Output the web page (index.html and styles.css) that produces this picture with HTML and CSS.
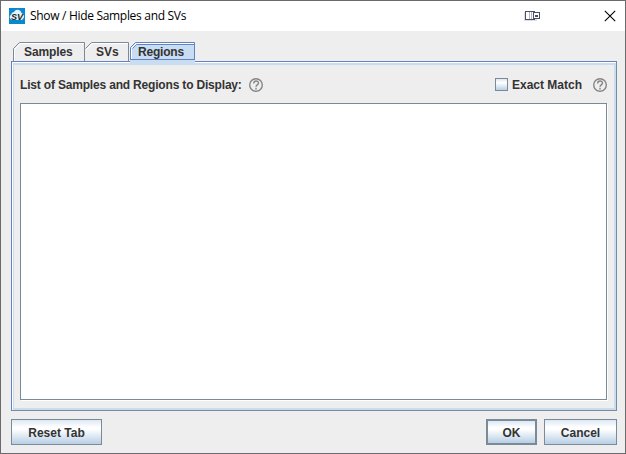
FILE: index.html
```html
<!DOCTYPE html>
<html lang="en">
<head>
<meta charset="utf-8">
<title>Show / Hide Samples and SVs</title>
<link rel="stylesheet" href="styles.css">
</head>
<body>
<div class="window">
  <header class="titlebar">
    <svg class="app-icon" width="16" height="16" viewBox="0 0 16 16"><path fill="#0788cf" d="M0 0h16v16H0z"/><path fill="#e4f3fa" d="M3 12a3 3 0 0 1-.8-5.500A3 3 0 0 1 5 4a4 4 0 0 1 7.500 1A3.800 3.800 0 0 1 13 12z"/><text class="app-letters" x="2" y="11.500">SV</text></svg>
    <h1 class="title">Show / Hide Samples and SVs</h1>
    <svg class="device" width="17" height="12" viewBox="0 0 17 12" shape-rendering="crispEdges"><path fill="#dddde2" d="M0 2h13v9H0z"/><path fill="#fff" stroke="#4b5064" d="M1.500 1.500h9v8h-9z"/><path stroke="#b5b7c0" d="M5.500 2v7M7.500 2v7"/><path fill="#fff" stroke="#4b5064" d="M9.500 2.500h6v6h-6z"/><path fill="#4b5064" d="M11 5h3v2h-3z"/></svg>
    <svg class="close" width="12" height="12" viewBox="0 0 12 12"><path stroke="#000" stroke-width="1.1" d="M.8.8l10.400 10.400M11.200.8L.8 11.200"/></svg>
  </header>
  <nav class="tabs">
    <div class="tab samples"><svg width="72" height="19"><path class="light" d="M1.500 19V7.500l6-6H71"/><path class="edge" d="M.5 19V6.500l6-6h65V19"/></svg><span>Samples</span></div>
    <div class="tab svs"><svg width="44" height="19"><path class="light" d="M1.500 7.500l6-6H43"/><path class="edge" d="M.5 6.500l6-6h37V19"/></svg><span>SVs</span></div>
    <div class="tab regions"><svg width="66" height="20"><path class="selected-fill" d="M1 20V6l5-5h59v19z"/><path class="light" d="M1.500 18V6.500l5-5H64"/><path class="selected-edge" d="M.5 19V5.500l5-5h59V19M2.500 6.500l4-4H64M1 17.500h63"/></svg><span>Regions</span></div>
  </nav>
  <main class="panel">
    <div class="options">
      <span class="list-label">List of Samples and Regions to Display:</span>
      <svg class="help" width="14" height="14" viewBox="0 0 14 14"><circle cx="7" cy="7" r="6.300"/><path d="M4.700 5.500c0-3.400 4.800-3.300 4.800-.4C9.500 6.900 7 6.900 7 8.800M7 9.800v1.600"/></svg>
      <label class="match"><span class="checkbox"></span>Exact Match</label>
      <svg class="help" width="14" height="14" viewBox="0 0 14 14"><circle cx="7" cy="7" r="6.300"/><path d="M4.700 5.500c0-3.400 4.800-3.300 4.800-.4C9.500 6.900 7 6.900 7 8.800M7 9.800v1.600"/></svg>
    </div>
    <div class="list"></div>
  </main>
  <footer class="actions">
    <button class="reset">Reset Tab</button>
    <button class="ok">OK</button>
    <button class="cancel">Cancel</button>
  </footer>
</div>
</body>
</html>
```
FILE: styles.css
```css
* { box-sizing: border-box; }
body { margin: 0; }
.window {
  width: 626px; height: 454px; overflow: hidden;
  border: 1px solid #6c6a6c;
  background: #eee; color: #333;
  font: bold 12px/14px "Liberation Sans", sans-serif;
}
.titlebar { display: flex; align-items: center; height: 30px; padding: 0 9px 0 8px; background: #fff; }
.app-icon { margin-top: -1px; }
.app-letters { font: italic bold 9px "Liberation Sans", sans-serif; fill: #202326; }
.title { margin: 0 0 0 5px; font: normal 12px/16px "Open Sans", sans-serif; letter-spacing: -.31px; white-space: nowrap; color: #000; }
.device { margin: 0 63px 0 auto; }
.close { margin-top: -1px; }
.tabs { display: flex; height: 30px; padding: 11px 0 0 12px; position: relative; z-index: 1; }
.tab { position: relative; height: 19px; line-height: 20px; flex: none; }
.tab svg { position: absolute; left: 0; top: 0; overflow: visible; }
.tab span { position: relative; }
.tab path { fill: none; }
.tab .edge { stroke: #7a8a99; }
.tab .light { stroke: #fff; }
.tab .selected-edge { stroke: #6382bf; }
.tab .selected-fill { fill: #c8ddf2; }
.samples { width: 72px; padding-left: 11px; }
.samples span { letter-spacing: -.1px; }
.svs { width: 44px; padding-left: 11px; }
.regions { width: 66px; margin-left: 1px; padding-left: 8px; }
.regions span { letter-spacing: -.2px; }
.regions::after { content: ""; position: absolute; left: 0; top: 18px; width: 65px; height: 4px; background: #c8ddf2; }
.panel {
  width: 606px; height: 350px; margin-left: 10px;
  padding: 14px 6px 6px 6px;
  border: 1px solid #7a8a99; border-left-color: #6382bf; border-top-color: #6382bf;
  box-shadow: inset 1px 1px #fff, inset 0 0 0 3px #c8ddf2;
  display: flex; flex-direction: column;
}
.panel { box-shadow: inset 1px 1px #fff, inset 0 0 0 2px #c8ddf2, inset 0 1px 0 2px #c8ddf2; }
.options { display: flex; align-items: center; height: 17px; padding: 0 3px 0 2px; }
.list-label { letter-spacing: -.18px; }
.help { margin-left: 7px; fill: none; stroke: #858585; stroke-width: 1.4; }
.match { display: flex; align-items: center; margin-left: auto; margin-right: 4px; }
.checkbox { width: 13px; height: 13px; margin-right: 4px; border: 1px solid #7a8a99; background: linear-gradient(#dde8f3, #fff 35%, #b8cfe5); }
.list { width: 587px; height: 297px; margin: 10px 0 0 2px; background: #fff; border: 1px solid #7a8a99; box-shadow: 1px 1px #fff; }
.actions { display: flex; margin: 8px 8px 0 10px; }
button {
  height: 26px; padding: 1px 0 0; border: 1px solid #7a8a99; border-radius: 0;
  background: linear-gradient(#dde8f3, #fff 30%, #fff 38%, #b8cfe5);
  color: #333; font: inherit;
}
.reset { width: 91px; }
.ok { width: 51px; margin-left: auto; border-width: 2px; }
.cancel { width: 73px; margin-left: 7px; }
```
